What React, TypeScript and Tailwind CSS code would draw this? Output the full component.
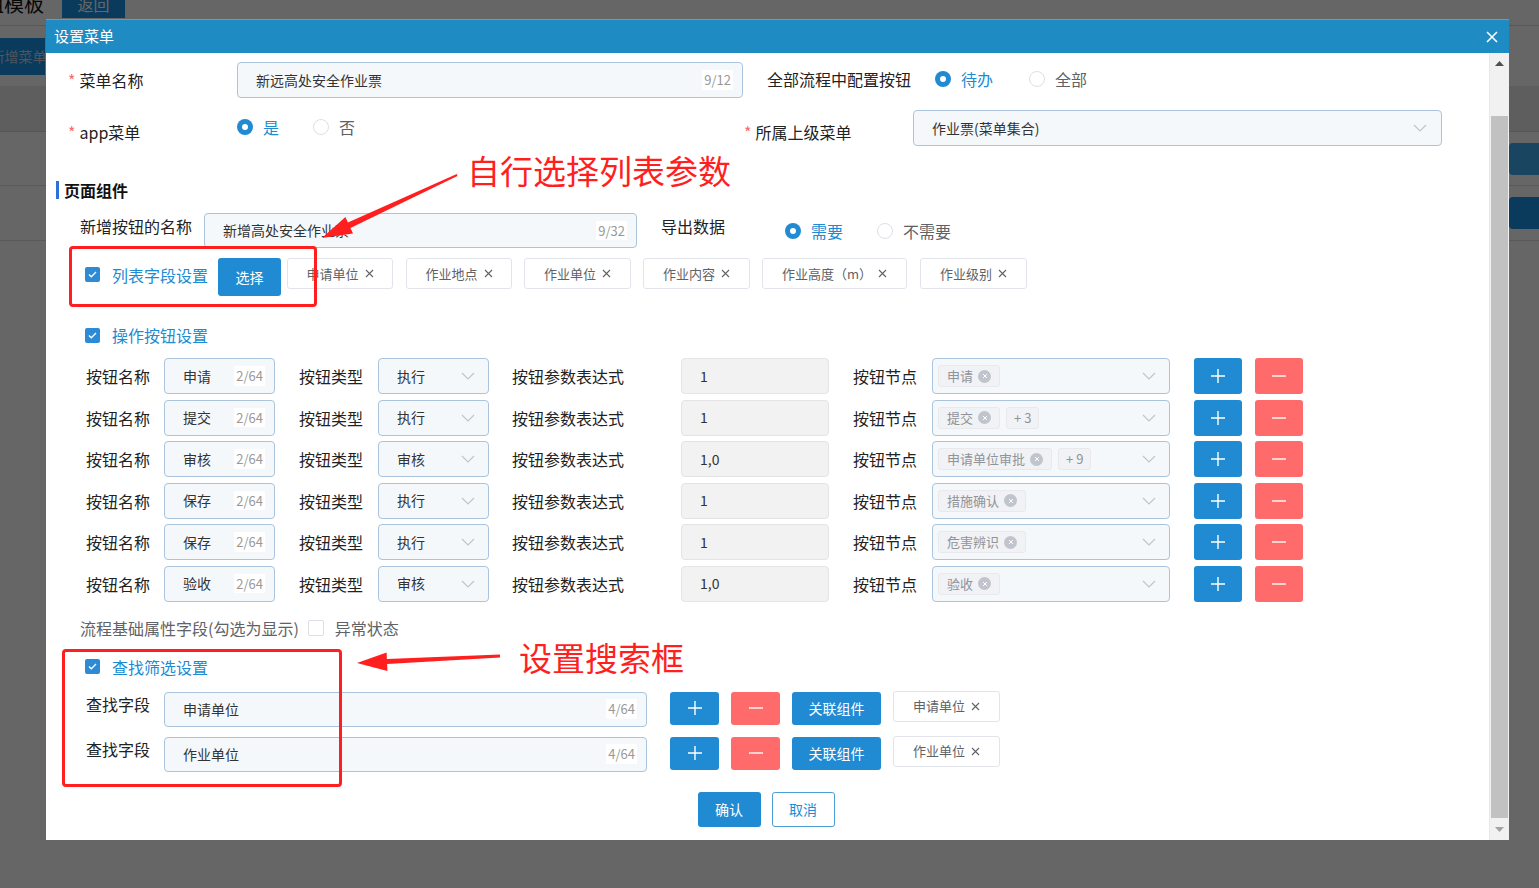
import React from 'react';

interface BtnRow {
  name: string;
  type: string;
  expr: string;
  node: string;
  more: number;
}

const buttonRows: BtnRow[] = [
  { name: '申请', type: '执行', expr: '1', node: '申请', more: 0 },
  { name: '提交', type: '执行', expr: '1', node: '提交', more: 3 },
  { name: '审核', type: '审核', expr: '1,0', node: '申请单位审批', more: 9 },
  { name: '保存', type: '执行', expr: '1', node: '措施确认', more: 0 },
  { name: '保存', type: '执行', expr: '1', node: '危害辨识', more: 0 },
  { name: '验收', type: '审核', expr: '1,0', node: '验收', more: 0 },
];

const listFields = [
  { label: '申请单位', w: 'w-[106px]', ml: 'ml-[6px]' },
  { label: '作业地点', w: 'w-[106px]', ml: 'ml-[13px]' },
  { label: '作业单位', w: 'w-[107px]', ml: 'ml-[12px]' },
  { label: '作业内容', w: 'w-[107px]', ml: 'ml-[12px]' },
  { label: '作业高度（m）', w: 'w-[145px]', ml: 'ml-[12px]' },
  { label: '作业级别', w: 'w-[107px]', ml: 'ml-[13px]' },
];

const Chevron = () => (
  <svg width="14" height="8" viewBox="0 0 14 8" className="shrink-0">
    <path d="M1 1l6 6 6-6" fill="none" stroke="#c0c4cc" strokeWidth="1.2" />
  </svg>
);

const SmallX = () => (
  <svg width="9" height="9" viewBox="0 0 9 9" className="shrink-0">
    <path d="M1 1l7 7M8 1l-7 7" stroke="#606266" strokeWidth="1.1" />
  </svg>
);

const Plus = () => (
  <svg width="14" height="14" viewBox="0 0 14 14">
    <path d="M7 0v14M0 7h14" stroke="#fff" strokeWidth="1.4" />
  </svg>
);

const Minus = () => (
  <svg width="14" height="14" viewBox="0 0 14 14">
    <path d="M0 7h14" stroke="#fff" strokeWidth="1.4" />
  </svg>
);

const Radio = ({ checked, label }: { checked?: boolean; label: string }) => (
  <div className="flex items-center gap-[10px]">
    {checked ? (
      <span className="w-4 h-4 rounded-full bg-[#208bd3] flex items-center justify-center">
        <span className="w-[6px] h-[6px] rounded-full bg-white" />
      </span>
    ) : (
      <span className="block w-4 h-4 rounded-full border border-[#dcdfe6] bg-white" />
    )}
    <span className={checked ? 'text-[16px] text-[#208bd3]' : 'text-[16px] text-[#606266]'}>{label}</span>
  </div>
);

const Checkbox = ({ checked }: { checked?: boolean }) =>
  checked ? (
    <span className="w-[15px] h-[15px] rounded-[2px] bg-[#2d8bd6] flex items-center justify-center shrink-0">
      <svg width="9" height="7" viewBox="0 0 9 7">
        <path d="M1 3.5l2.3 2.3L8 1" fill="none" stroke="#fff" strokeWidth="1.3" />
      </svg>
    </span>
  ) : (
    <span className="block w-[16px] h-[16px] rounded-[2px] border border-[#dcdfe6] bg-white shrink-0" />
  );

const TextInput = ({ value, count, className }: { value: string; count: string; className: string }) => (
  <div
    className={`flex items-center justify-between border border-[#a9c4dc] bg-[#f5f8fb] rounded-[4px] pl-[18px] pr-[9px] ${className}`}
  >
    <span className="text-[14px] text-[#333]">{value}</span>
    <span className="text-[13px] text-[#999] bg-white px-[2px]">{count}</span>
  </div>
);

const SelectBox = ({ value, className }: { value: string; className: string }) => (
  <div
    className={`flex items-center justify-between border border-[#a9c4dc] bg-[#f5f8fb] rounded-[4px] pl-[18px] pr-[13px] ${className}`}
  >
    <span className="text-[14px] text-[#333]">{value}</span>
    <Chevron />
  </div>
);

const FieldTag = ({ label, className }: { label: string; className: string }) => (
  <div
    className={`h-[31px] flex items-center justify-center gap-[6px] border border-[#e1e4eb] rounded-[3px] bg-white text-[13px] text-[#606266] ${className}`}
  >
    <span>{label}</span>
    <SmallX />
  </div>
);

const NodeTag = ({ label }: { label: string }) => (
  <span className="h-[22px] flex items-center gap-[5px] px-[8px] rounded-[3px] border border-[#e9e9eb] bg-[#f0f2f5] text-[13px] text-[#909399]">
    {label}
    <span className="w-[13px] h-[13px] rounded-full bg-[#c0c4cc] flex items-center justify-center">
      <svg width="6" height="6" viewBox="0 0 6 6">
        <path d="M1 1l4 4M5 1l-4 4" stroke="#fff" strokeWidth="1" />
      </svg>
    </span>
  </span>
);

const ButtonRow = ({ row }: { row: BtnRow }) => (
  <div className="flex items-center h-[36px] text-[16px] text-[#222]">
    <span className="ml-[40px] w-[78px]">按钮名称</span>
    <TextInput value={row.name} count="2/64" className="w-[111px] h-[36px]" />
    <span className="ml-[24px] w-[79px]">按钮类型</span>
    <SelectBox value={row.type} className="w-[111px] h-[36px]" />
    <span className="ml-[23px] w-[169px]">按钮参数表达式</span>
    <div className="w-[148px] h-[36px] flex items-center pl-[18px] border border-[#e4e4e4] bg-[#f2f2f2] rounded-[4px] text-[14px] text-[#333]">
      {row.expr}
    </div>
    <span className="ml-[24px] w-[79px]">按钮节点</span>
    <div className="w-[238px] h-[36px] flex items-center justify-between border border-[#a9c4dc] bg-[#f5f8fb] rounded-[4px] pl-[5px] pr-[13px]">
      <div className="flex items-center gap-[6px]">
        <NodeTag label={row.node} />
        {row.more > 0 && (
          <span className="h-[22px] flex items-center px-[7px] rounded-[3px] border border-[#e9e9eb] bg-[#f0f2f5] text-[13px] text-[#909399]">
            + {row.more}
          </span>
        )}
      </div>
      <Chevron />
    </div>
    <button className="ml-[24px] w-[48px] h-[36px] rounded-[3px] bg-[#208bd3] flex items-center justify-center">
      <Plus />
    </button>
    <button className="ml-[13px] w-[48px] h-[36px] rounded-[3px] bg-[#ff6a6a] flex items-center justify-center">
      <Minus />
    </button>
  </div>
);

const SearchRow = ({ value }: { value: string }) => (
  <div className="flex items-start h-[35px] text-[16px] text-[#222]">
    <span className="ml-[40px] w-[78px] self-center pb-[11px]">查找字段</span>
    <TextInput value={value} count="4/64" className="w-[483px] h-[35px]" />
    <button className="ml-[23px] w-[49px] h-[33px] rounded-[3px] bg-[#208bd3] flex items-center justify-center">
      <Plus />
    </button>
    <button className="ml-[12px] w-[49px] h-[33px] rounded-[3px] bg-[#ff6a6a] flex items-center justify-center">
      <Minus />
    </button>
    <button className="ml-[12px] w-[89px] h-[33px] rounded-[3px] bg-[#208bd3] text-white text-[14px]">关联组件</button>
    <FieldTag label={value} className="ml-[12px] w-[107px] -mt-[1px]" />
  </div>
);

const Dialog = () => (
  <div className="absolute left-[46px] top-[19px] w-[1463px] h-[821px] flex flex-col bg-white">
    <div className="h-[34px] bg-[#1e8bc3] flex items-center justify-between pl-[8px] pr-[11px] border-t border-[#4aa6d6]">
      <span className="text-white text-[15px]">设置菜单</span>
      <svg width="12" height="12" viewBox="0 0 12 12">
        <path d="M1 1l10 10M11 1L1 11" stroke="#fff" strokeWidth="1.6" />
      </svg>
    </div>
    <div className="flex-1 flex min-h-0">
      <div className="flex-1 flex flex-col text-[#222]">
        {/* 菜单名称 */}
        <div className="mt-[9px] flex items-center h-[36px] text-[16px]">
          <span className="ml-[22px] w-[169px]">
            <span className="text-[#f56c6c] mr-[4px]">*</span>菜单名称
          </span>
          <TextInput value="新远高处安全作业票" count="9/12" className="w-[506px] h-[36px]" />
          <span className="ml-[24px] pb-[3px]">全部流程中配置按钮</span>
          <div className="ml-[24px] flex items-center gap-[36px] pb-[3px]">
            <Radio checked label="待办" />
            <Radio label="全部" />
          </div>
        </div>

        {/* app菜单 */}
        <div className="mt-[12px] flex items-center h-[36px] text-[16px]">
          <span className="ml-[22px] w-[169px] pt-[8px]">
            <span className="text-[#f56c6c] mr-[4px]">*</span>app菜单
          </span>
          <div className="w-[507px] flex items-center gap-[34px] pb-[2px]">
            <Radio checked label="是" />
            <Radio label="否" />
          </div>
          <span className="w-[169px] pt-[8px]">
            <span className="text-[#f56c6c] mr-[4px]">*</span>所属上级菜单
          </span>
          <SelectBox value="作业票(菜单集合)" className="w-[529px] h-[36px] pr-[14px]" />
        </div>

        {/* 页面组件 */}
        <div className="mt-[35px] ml-[10px] h-[18px] flex items-center gap-[5px]">
          <span className="w-[3px] h-[18px] bg-[#2f6fd8]" />
          <span className="text-[16px] font-bold text-[#111]">页面组件</span>
        </div>

        <div className="mt-[14px] flex items-center h-[35px] text-[16px]">
          <span className="ml-[34px] w-[124px] pb-[9px]">新增按钮的名称</span>
          <TextInput value="新增高处安全作业票" count="9/32" className="w-[433px] h-[35px]" />
          <span className="ml-[24px] w-[124px] pb-[9px]">导出数据</span>
          <div className="flex items-center gap-[34px]">
            <Radio checked label="需要" />
            <Radio label="不需要" />
          </div>
        </div>

        {/* 列表字段设置 */}
        <div className="mt-[10px] flex items-start h-[38px]">
          <div className="ml-[39px] h-[33px] flex items-center gap-[12px]">
            <Checkbox checked />
            <span className="text-[16px] text-[#208bd3]">列表字段设置</span>
          </div>
          <button className="ml-[10px] w-[63px] h-[38px] rounded-[3px] bg-[#208bd3] text-white text-[14px]">选择</button>
          {listFields.map((f) => (
            <FieldTag key={f.label} label={f.label} className={`${f.w} ${f.ml}`} />
          ))}
        </div>

        {/* 操作按钮设置 */}
        <div className="mt-[29px] ml-[39px] h-[20px] flex items-center gap-[12px]">
          <Checkbox checked />
          <span className="text-[16px] text-[#208bd3]">操作按钮设置</span>
        </div>

        <div className="mt-[13px] flex flex-col gap-[5.5px]">
          {buttonRows.map((r, i) => (
            <ButtonRow key={i} row={r} />
          ))}
        </div>

        <div className="mt-[16px] h-[20px] flex items-center text-[16px]">
          <span className="ml-[34px] text-[#606266]">流程基础属性字段(勾选为显示)</span>
          <span className="ml-[9px]">
            <Checkbox />
          </span>
          <span className="ml-[11px] text-[#606266]">异常状态</span>
        </div>

        {/* 查找筛选设置 */}
        <div className="mt-[19px] ml-[39px] h-[20px] flex items-center gap-[12px]">
          <Checkbox checked />
          <span className="text-[16px] text-[#208bd3]">查找筛选设置</span>
        </div>

        <div className="mt-[15px] flex flex-col gap-[10px]">
          <SearchRow value="申请单位" />
          <SearchRow value="作业单位" />
        </div>

        <div className="mt-[20px] flex justify-center gap-[11px] pr-[3px]">
          <button className="w-[63px] h-[35px] rounded-[3px] bg-[#208bd3] text-white text-[14px]">确认</button>
          <button className="w-[63px] h-[35px] rounded-[3px] border border-[#4da0d6] bg-white text-[#208bd3] text-[14px]">
            取消
          </button>
        </div>
      </div>

      {/* 滚动条 */}
      <div className="w-[20px] bg-[#f1f1f1] flex flex-col items-center border-l border-[#e8e8e8]">
        <div className="h-[20px] flex items-center justify-center">
          <svg width="9" height="5" viewBox="0 0 9 5">
            <path d="M0 5L4.5 0 9 5z" fill="#505050" />
          </svg>
        </div>
        <div className="mt-[43px] w-[17px] h-[702px] bg-[#c1c1c1]" />
        <div className="flex-1 flex items-center justify-center">
          <svg width="9" height="5" viewBox="0 0 9 5">
            <path d="M0 0h9L4.5 5z" fill="#a3a3a3" />
          </svg>
        </div>
      </div>
    </div>
  </div>
);

const Annotations = () => (
  <>
    <div className="absolute left-[69px] top-[246px] w-[248px] h-[61px] border-[3px] border-[#ff1f1f] rounded-[4px]" />
    <div className="absolute left-[62px] top-[649px] w-[280px] h-[138px] border-[3px] border-[#ff1f1f] rounded-[4px]" />
    <div className="absolute left-[467px] top-[148px] text-[33px] leading-[44px] text-[#ff1f1f]">自行选择列表参数</div>
    <div className="absolute left-[519px] top-[635px] text-[33px] leading-[44px] text-[#ff1f1f]">设置搜索框</div>
    <svg className="absolute left-0 top-0" width="1539" height="888" viewBox="0 0 1539 888">
      <polygon
        points="456.8,174 347.9,222.6 345.4,217.1 322,238 353,233.5 350.5,228 457.4,176"
        fill="#ff1f1f"
      />
      <polygon points="500,654.5 386.9,659 386.6,652.5 357,663 387.4,671 387.1,664 500,657.5" fill="#ff1f1f" />
    </svg>
  </>
);

const App: React.FC = () => {
  return (
    <div className="relative w-[1539px] h-[888px] overflow-hidden bg-white font-['Microsoft_YaHei','Noto_Sans_CJK_SC',sans-serif]">
      {/* 背景页面 */}
      <div className="flex flex-col">
        <div className="h-[26px] flex items-start border-b border-[#dcdcdc]">
          <span className="-ml-[16px] -mt-[11px] text-[20px] text-[#111]">组模板</span>
          <span className="ml-[18px] -mt-[10px] w-[63px] h-[28px] bg-[#1b91e6] text-white text-[16px] flex items-center justify-center">
            返回
          </span>
        </div>
        <div className="h-[60px] pt-[12px]">
          <span className="-ml-[8px] w-[53px] h-[37px] bg-[#1b91e6] text-[#c0d6e6] text-[14px] flex items-center justify-center overflow-hidden whitespace-nowrap">
            新增菜单
          </span>
        </div>
        <div className="h-[46px] bg-[#ebebeb] border-b border-[#d6d6d6]" />
        <div className="h-[54px] border-b border-[#dedede] flex justify-end items-center">
          <span className="w-[30px] h-[32px] rounded-l-[4px] bg-[#41acf2]" />
        </div>
        <div className="h-[55px] border-b border-[#dedede] flex justify-end items-center">
          <span className="w-[30px] h-[32px] rounded-l-[4px] bg-[#1b91e6]" />
        </div>
      </div>
      <div className="absolute inset-0 bg-black/60" />
      <Dialog />
      <Annotations />
    </div>
  );
};

export default App;
